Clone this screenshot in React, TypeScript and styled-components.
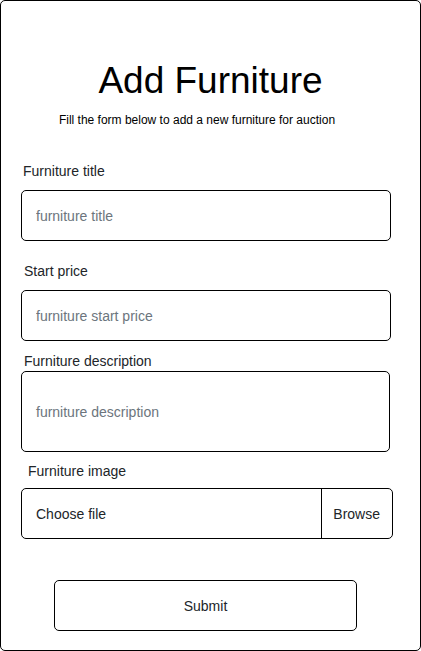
import styled, { createGlobalStyle } from 'styled-components'

const GlobalStyle = createGlobalStyle`
  html, body {
    margin: 0;
    padding: 0;
    background: #fff;
  }

  body {
    font-family: 'Liberation Sans', Arial, sans-serif;
    color: #212529;
  }

  * {
    box-sizing: border-box;
  }
`

interface IFieldProps {
  label: string
  indent: number
  spaceAbove: number
  gap: number
  children: React.ReactNode
}

const Field = ({ label, indent, spaceAbove, gap, children }: IFieldProps) => (
  <FieldGroup $spaceAbove={spaceAbove} $gap={gap}>
    <Label $indent={indent}>{label}</Label>
    {children}
  </FieldGroup>
)

export default function App() {
  return (
    <>
      <GlobalStyle />
      <Card>
        <Title>Add Furniture</Title>
        <Subtitle>Fill the form below to add a new furniture for auction</Subtitle>

        <Form onSubmit={(e) => e.preventDefault()}>
          <Field label="Furniture title" indent={2} spaceAbove={0} gap={10}>
            <Input type="text" placeholder="furniture title" />
          </Field>

          <Field label="Start price" indent={3} spaceAbove={21} gap={10}>
            <Input type="text" placeholder="furniture start price" />
          </Field>

          <Field label="Furniture description" indent={3} spaceAbove={11} gap={1}>
            <TextArea placeholder="furniture description" />
          </Field>

          <Field label="Furniture image" indent={7} spaceAbove={10} gap={8}>
            <FilePicker>
              <HiddenFile type="file" />
              <FileName>Choose file</FileName>
              <BrowseButton>Browse</BrowseButton>
            </FilePicker>
          </Field>

          <SubmitButton type="submit">Submit</SubmitButton>
        </Form>
      </Card>
    </>
  )
}

const Card = styled.div`
  display: flex;
  flex-direction: column;
  align-items: center;

  width: 421px;
  height: 651px;
  padding: 58px 20px 0;

  border: 1px solid #000;
  border-radius: 5px;
  background: #fff;
`

const Title = styled.h1`
  margin: 0;

  color: #000;
  font-size: 37px;
  font-weight: 400;
  line-height: 44px;
`

const Subtitle = styled.p`
  margin: 9px 27px 0 0;

  color: #000;
  font-size: 12px;
  line-height: 16px;
`

const Form = styled.form`
  display: flex;
  flex-direction: column;
  align-self: stretch;

  margin-top: 34px;
`

const FieldGroup = styled.div<{ $spaceAbove: number; $gap: number }>`
  display: flex;
  flex-direction: column;
  gap: ${(props) => props.$gap}px;

  margin-top: ${(props) => props.$spaceAbove}px;
`

const Label = styled.label<{ $indent: number }>`
  padding-left: ${(props) => props.$indent}px;

  font-size: 14px;
  line-height: 18px;
  color: #212529;
`

const Input = styled.input`
  width: 370px;
  height: 51px;
  padding: 0 14px;

  border: 1px solid #000;
  border-radius: 5px;
  outline: 0;

  font-family: 'Liberation Sans', Arial, sans-serif;
  font-size: 14px;
  color: #212529;

  &::placeholder {
    color: #6c757d;
  }
`

const TextArea = styled.textarea`
  width: 369px;
  height: 81px;
  padding: 31px 14px 0;

  border: 1px solid #000;
  border-radius: 5px;
  outline: 0;
  resize: none;

  font-family: 'Liberation Sans', Arial, sans-serif;
  font-size: 14px;
  line-height: 18px;
  color: #212529;

  &::placeholder {
    color: #6c757d;
  }
`

const FilePicker = styled.label`
  display: flex;
  align-items: stretch;

  width: 372px;
  height: 51px;

  border: 1px solid #000;
  border-radius: 5px;
  overflow: hidden;
  cursor: pointer;
`

const HiddenFile = styled.input`
  display: none;
`

const FileName = styled.span`
  display: flex;
  align-items: center;
  flex: 1;

  padding-left: 14px;

  font-size: 14px;
  color: #212529;
`

const BrowseButton = styled.span`
  display: flex;
  align-items: center;

  padding: 0 12px 0 11px;
  border-left: 1px solid #000;

  font-size: 14px;
  color: #212529;
`

const SubmitButton = styled.button`
  align-self: flex-start;

  width: 303px;
  height: 51px;
  margin: 41px 0 0 33px;

  border: 1px solid #000;
  border-radius: 5px;
  background: #fff;
  outline: 0;

  font-family: 'Liberation Sans', Arial, sans-serif;
  font-size: 14px;
  color: #212529;
  cursor: pointer;
`
